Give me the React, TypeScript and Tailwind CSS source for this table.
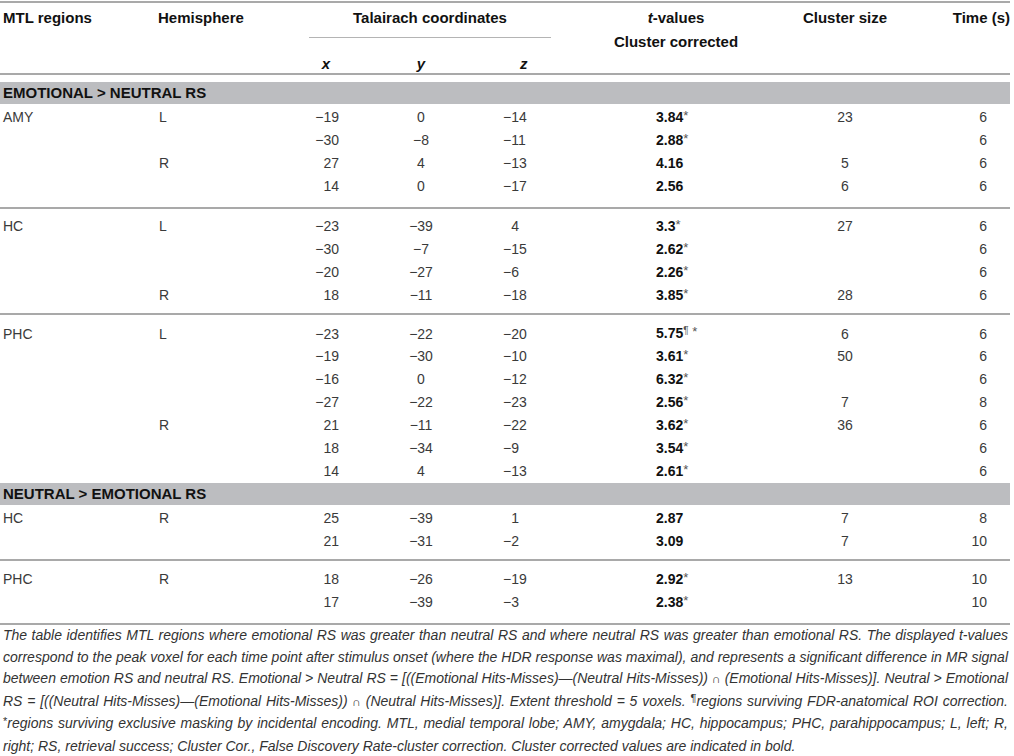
import React from "react";

const M = "\u2212";

type Row = {
  region?: string;
  hemi?: string;
  x: string;
  y: string;
  z: string;
  t: string;
  mark?: "star" | "pil" | "none";
  size?: string;
  time: string;
};

type Group = { rows: Row[]; pt: string; pb: string; line: boolean };

const n = (v: number) => (v < 0 ? M + Math.abs(v) : String(v));

const r = (
  region: string | undefined,
  hemi: string | undefined,
  x: number,
  y: number,
  z: number,
  t: string,
  mark: "star" | "pil" | "none",
  size: string | undefined,
  time: string
): Row => ({ region, hemi, x: n(x), y: n(y), z: n(z), t, mark, size, time });

const section1: Group[] = [
  {
    pt: "pt-[2px]",
    pb: "pb-[9px]",
    line: true,
    rows: [
      r("AMY", "L", -19, 0, -14, "3.84", "star", "23", "6"),
      r(undefined, undefined, -30, -8, -11, "2.88", "star", undefined, "6"),
      r(undefined, "R", 27, 4, -13, "4.16", "none", "5", "6"),
      r(undefined, undefined, 14, 0, -17, "2.56", "none", "6", "6"),
    ],
  },
  {
    pt: "pt-[6px]",
    pb: "pb-[6px]",
    line: true,
    rows: [
      r("HC", "L", -23, -39, 4, "3.3", "star", "27", "6"),
      r(undefined, undefined, -30, -7, -15, "2.62", "star", undefined, "6"),
      r(undefined, undefined, -20, -27, -6, "2.26", "star", undefined, "6"),
      r(undefined, "R", 18, -11, -18, "3.85", "star", "28", "6"),
    ],
  },
  {
    pt: "pt-[7px]",
    pb: "pb-0",
    line: false,
    rows: [
      r("PHC", "L", -23, -22, -20, "5.75", "pil", "6", "6"),
      r(undefined, undefined, -19, -30, -10, "3.61", "star", "50", "6"),
      r(undefined, undefined, -16, 0, -12, "6.32", "star", undefined, "6"),
      r(undefined, undefined, -27, -22, -23, "2.56", "star", "7", "8"),
      r(undefined, "R", 21, -11, -22, "3.62", "star", "36", "6"),
      r(undefined, undefined, 18, -34, -9, "3.54", "star", undefined, "6"),
      r(undefined, undefined, 14, 4, -13, "2.61", "star", undefined, "6"),
    ],
  },
];

const section2: Group[] = [
  {
    pt: "pt-[2px]",
    pb: "pb-[6px]",
    line: true,
    rows: [
      r("HC", "R", 25, -39, 1, "2.87", "none", "7", "8"),
      r(undefined, undefined, 21, -31, -2, "3.09", "none", "7", "10"),
    ],
  },
  {
    pt: "pt-[7px]",
    pb: "pb-[9px]",
    line: true,
    rows: [
      r("PHC", "R", 18, -26, -19, "2.92", "star", "13", "10"),
      r(undefined, undefined, 17, -39, -3, "2.38", "star", undefined, "10"),
    ],
  },
];

const COLS =
  "grid grid-cols-[158px_142px_45px_152px_103px_160px_170px_80px]";

function Z({ v }: { v: string }) {
  if (v.startsWith(M)) return <>{v}</>;
  return (
    <>
      <span className="invisible">{M}</span>
      {v}
    </>
  );
}

function DataRow({ row }: { row: Row }) {
  return (
    <div className={`${COLS} h-[23px] items-center leading-[23px] text-[14px] text-[#3a3a3a]`}>
      <div className="pl-[3px]">{row.region ?? ""}</div>
      <div className="pl-[1px]">{row.hemi ?? ""}</div>
      <div className="text-right pr-[6px]">{row.x}</div>
      <div className="text-center">{row.y}</div>
      <div className="pl-[6px]">
        <Z v={row.z} />
      </div>
      <div className="pl-[56px]">
        <span className="font-bold text-[#111]">{row.t}</span>
        {row.mark === "star" && (
          <span className="relative top-[-2px] text-[13px] text-[#555]">*</span>
        )}
        {row.mark === "pil" && (
          <>
            <span className="relative top-[-4px] text-[10px] text-[#555]">¶</span>
            <span className="relative top-[-2px] text-[13px] text-[#555]"> *</span>
          </>
        )}
      </div>
      <div className="text-center">{row.size ?? ""}</div>
      <div className="text-right pr-[23px]">{row.time}</div>
    </div>
  );
}

function Groups({ groups }: { groups: Group[] }) {
  return (
    <>
      {groups.map((g, i) => (
        <div key={i}>
          <div className={`${g.pt} ${g.pb}`}>
            {g.rows.map((row, j) => (
              <DataRow key={j} row={row} />
            ))}
          </div>
          {g.line && <div className="h-[2px] bg-[#a9a9a9]" />}
        </div>
      ))}
    </>
  );
}

function Bar({ children, extra }: { children: React.ReactNode; extra?: string }) {
  return (
    <div
      className={`h-[22px] bg-[#bcbdc0] pl-[3px] text-[15px] font-bold leading-[22px] text-[#111] ${extra ?? ""}`}
    >
      {children}
    </div>
  );
}

const footLines: React.ReactNode[] = [
  <>
    The table identifies MTL regions where emotional RS was greater than neutral RS and where neutral
    RS was greater than emotional RS. The displayed t-values
  </>,
  <>
    correspond to the peak voxel for each time point after stimulus onset (where the HDR response was
    maximal), and represents a significant difference in MR signal
  </>,
  <>
    between emotion RS and neutral RS. Emotional &gt; Neutral RS = [((Emotional Hits-Misses)—(Neutral
    Hits-Misses)) <span className="not-italic text-[12px]">∩</span> (Emotional Hits-Misses)]. Neutral
    &gt; Emotional
  </>,
  <>
    RS = [((Neutral Hits-Misses)—(Emotional Hits-Misses)){" "}
    <span className="not-italic text-[12px]">∩</span> (Neutral Hits-Misses)]. Extent threshold = 5
    voxels. <span className="relative top-[-4px] not-italic text-[11px]">¶</span>regions surviving
    FDR-anatomical ROI correction.
  </>,
  <>
    <span className="relative top-[-3px] not-italic text-[11px]">*</span>regions surviving exclusive
    masking by incidental encoding. MTL, medial temporal lobe; AMY, amygdala; HC, hippocampus; PHC,
    parahippocampus; L, left; R,
  </>,
];

export default function App() {
  return (
    <div className="w-[1014px] h-[756px] bg-white font-['Liberation_Sans',Arial,sans-serif]">
      <div className="w-[1010px]">
        {/* top rule */}
        <div className="pt-[1px]">
          <div className="h-[2px] bg-[#a9a9a9]" />
        </div>

        {/* header */}
        <div className="flex h-[70px] text-[15px] font-bold text-[#111]">
          <div className="w-[158px] pl-[3px] pt-[5px] leading-[20px]">MTL regions</div>
          <div className="w-[142px] pt-[5px] leading-[20px]">Hemisphere</div>
          <div className="flex w-[300px] flex-col">
            <div className="ml-[9px] w-[242px] border-b border-[#b4b4b4] pt-[5px] pb-[9px] text-center leading-[20px]">
              Talairach coordinates
            </div>
            <div className="mt-[17px] flex italic leading-[18px]">
              <div className="w-[45px] pr-[15px] text-right">x</div>
              <div className="w-[152px] text-center">y</div>
              <div className="w-[103px] pl-[23px]">z</div>
            </div>
          </div>
          <div className="flex w-[160px] flex-col pr-[8px] text-center">
            <div className="pt-[5px] leading-[20px]">
              <span className="italic">t</span>-values
            </div>
            <div className="mt-[4px] leading-[20px]">Cluster corrected</div>
          </div>
          <div className="w-[170px] pt-[5px] text-center leading-[20px]">Cluster size</div>
          <div className="w-[80px] pt-[5px] text-right leading-[20px] whitespace-nowrap">Time (s)</div>
        </div>
        <div className="h-[2px] bg-[#a9a9a9]" />

        {/* section 1 */}
        <Bar extra="mt-[7px]">EMOTIONAL &gt; NEUTRAL RS</Bar>
        <Groups groups={section1} />

        {/* section 2 */}
        <Bar>NEUTRAL &gt; EMOTIONAL RS</Bar>
        <Groups groups={section2} />

        {/* footnote */}
        <div className="pl-[3px] pr-[2px] text-[14px] italic leading-[21.6px] text-[#333]">
          {footLines.map((l, i) => (
            <div key={i} className="text-justify [text-align-last:justify] whitespace-nowrap">
              {l}
            </div>
          ))}
          <div>
            right; RS, retrieval success; Cluster Cor., False Discovery Rate-cluster correction. Cluster
            corrected values are indicated in bold.
          </div>
        </div>
      </div>
    </div>
  );
}
